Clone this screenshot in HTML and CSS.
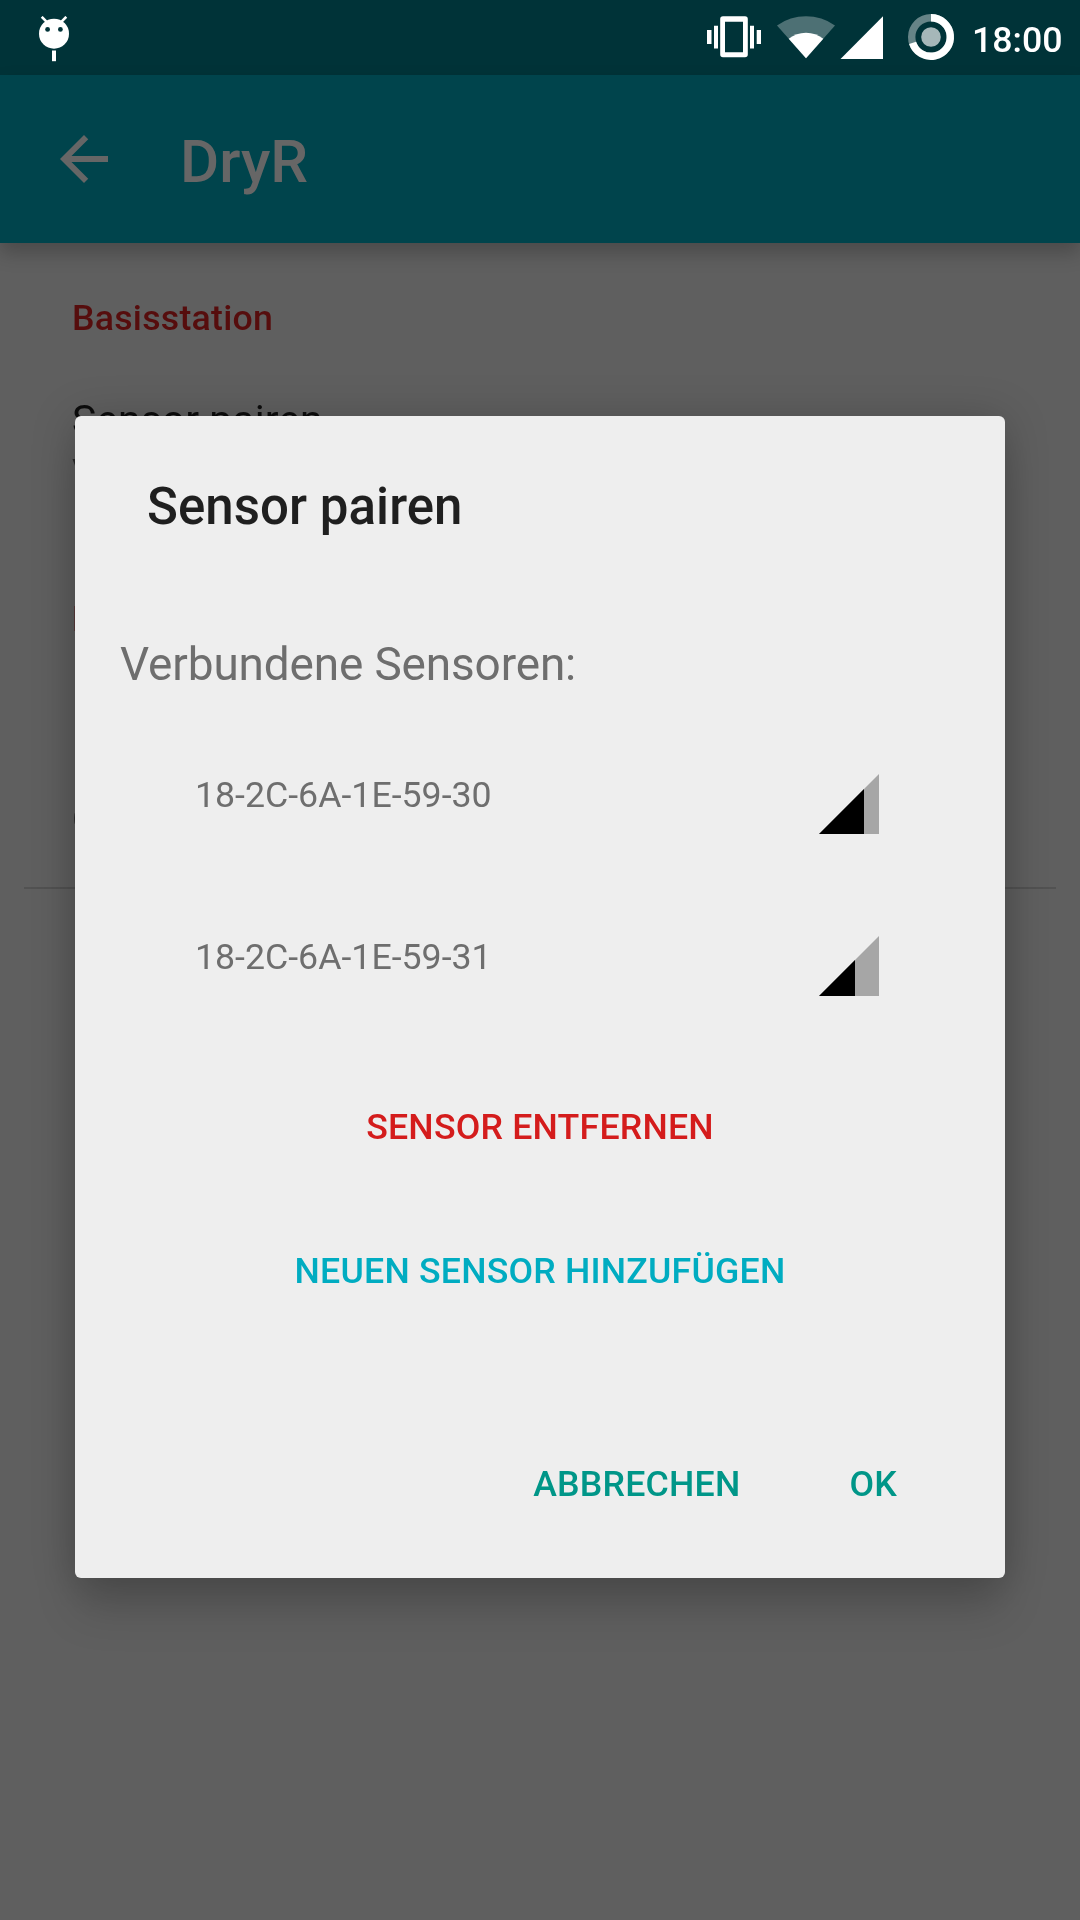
FILE: index.html
```html
<!DOCTYPE html>
<html lang="de">
<head>
<meta charset="utf-8">
<title>DryR</title>
<link rel="stylesheet" href="styles.css">
</head>
<body>
<div class="screen">
  <header class="status-bar">
    <svg class="debug-icon" width="32" height="48" viewBox="0 0 32 48">
      <circle cx="16" cy="17.7" r="15" fill="#fff"/>
      <path d="M3.7 .8l5 5M28.3 .8l-5 5" stroke="#fff" stroke-width="2.6"/>
      <circle class="eye" cx="9.6" cy="13.4" r="2.4"/>
      <circle class="eye" cx="22.4" cy="13.4" r="2.4"/>
      <path d="M14 34.5h4V45.2h-4z" fill="#fff"/>
    </svg>
    <svg class="status-icons" width="260" height="75" viewBox="700 0 260 75" fill="#fff">
      <path fill-rule="evenodd" d="M723 16.3h22q2.8 0 2.8 2.8v35.4q0 2.8-2.8 2.8h-22q-2.8 0-2.8-2.8V19.1q0-2.8 2.8-2.8zM725 21.8v30.4h18V21.8z"/>
      <path d="M714 25.7h4v22.7h-4zM707 30h4.5v14H707zM750 25.7h4v22.7h-4zM756.7 30h4.3v14h-4.3z"/>
      <path opacity=".3" d="M806 58.3L777 25.5A50 50 0 0 1 835 25.5z"/>
      <path d="M806 58.3L788.7 38.8A27.6 27.6 0 0 1 823.3 38.8z"/>
      <path d="M840.5 59H883V16.3z"/>
      <circle cx="931" cy="37" r="19.3" fill="none" stroke="#fff" stroke-opacity=".4" stroke-width="7.4"/>
      <path d="M931 17.7A19.3 19.3 0 1 1 912.6 42.8" fill="none" stroke="#fff" stroke-width="7.4"/>
      <circle cx="931" cy="37" r="9.8" opacity=".65"/>
    </svg>
    <span class="clock">18:00</span>
  </header>

  <div class="app-bar">
    <svg width="72" height="72" viewBox="0 0 24 24"><path d="M20 11H7.83l5.59-5.59L12 4l-8 8 8 8 1.41-1.41L7.83 13H20z"/></svg>
    <h1 class="app-title">DryR</h1>
  </div>

  <main class="settings">
    <h2 class="category">Basisstation</h2>
    <div class="preference">
      <div class="pref-title">Sensor pairen</div>
      <div class="pref-summary">V</div>
    </div>
    <h2 class="category category-next">B</h2>
    <div class="preference preference-last">
      <div class="pref-title">G</div>
    </div>
  </main>

  <section class="dialog" role="dialog">
    <h2 class="dialog-title">Sensor pairen</h2>
    <p class="dialog-label">Verbundene Sensoren:</p>
    <ul class="sensors">
      <li class="sensor">
        <span class="sensor-id">18-2C-6A-1E-59-30</span>
        <svg width="60" height="60" viewBox="0 0 60 60"><path d="M0 60H60V0z" fill="#a6a6a6"/><path d="M0 60H45V15z"/></svg>
      </li>
      <li class="sensor">
        <span class="sensor-id">18-2C-6A-1E-59-31</span>
        <svg width="60" height="60" viewBox="0 0 60 60"><path d="M0 60H60V0z" fill="#a6a6a6"/><path d="M0 60H36V24z"/></svg>
      </li>
    </ul>
    <button class="action remove">SENSOR ENTFERNEN</button>
    <button class="action add">NEUEN SENSOR HINZUFÜGEN</button>
    <footer class="dialog-buttons">
      <button class="action">ABBRECHEN</button>
      <button class="action">OK</button>
    </footer>
  </section>
</div>
</body>
</html>
```
FILE: styles.css
```css
* {
  box-sizing: border-box;
  margin: 0;
  padding: 0;
}

body {
  font-family: Roboto, "Liberation Sans", sans-serif;
  background: #5f5f5f;
}

svg {
  display: block;
  flex: none;
}

.screen {
  position: relative;
  display: flex;
  flex-direction: column;
  width: 1080px;
  height: 1920px;
  overflow: hidden;
  will-change: transform;
}

.status-bar {
  display: flex;
  align-items: center;
  height: 75px;
  flex: none;
  padding: 0 18px 0 38px;
  background: #003338;
  color: #fff;
}

.debug-icon {
  margin-top: 5px;
}

.eye {
  fill: #003338;
}

.status-icons {
  margin-left: auto;
}

.clock {
  width: 102px;
  padding: 4px 0 0 12px;
  font-size: 35.7px;
  font-weight: 500;
  line-height: 48px;
}

.app-bar {
  display: flex;
  align-items: center;
  gap: 60px;
  height: 168px;
  flex: none;
  padding-left: 48px;
  background: #00444c;
  color: #666;
  fill: #666;
  box-shadow: 0 10px 18px rgba(0, 0, 0, .22);
}

.app-title {
  padding-top: 5px;
  font-size: 60px;
  font-weight: 500;
  line-height: 72px;
}

.settings {
  padding: 51px 24px 0;
}

.category {
  padding-left: 48px;
  font-size: 35.7px;
  font-weight: 500;
  line-height: 48px;
  letter-spacing: .24px;
  color: #560d0d;
}

.category-next {
  margin-top: 99px;
}

.preference {
  padding: 52px 0 0 48px;
}

.pref-title {
  font-size: 40.8px;
  line-height: 52px;
  letter-spacing: .1px;
  color: #0c0c0c;
}

.pref-summary {
  margin-top: 2px;
  font-size: 35.7px;
  line-height: 48px;
  color: #2b2b2b;
}

.preference-last {
  padding: 150px 0 42px 48px;
  border-bottom: 2px solid #525252;
}

.dialog {
  position: absolute;
  left: 75px;
  top: 416px;
  display: flex;
  flex-direction: column;
  width: 930px;
  height: 1162px;
  padding: 61px 0 0;
  border-radius: 6px;
  background: #eee;
  box-shadow: 0 36px 44px -2px rgba(0, 0, 0, .13), 0 3px 44px rgba(0, 0, 0, .21);
}

.dialog-title {
  padding-left: 72px;
  font-size: 51px;
  font-weight: 500;
  line-height: 60px;
  letter-spacing: .05px;
  color: #1f1f1f;
}

.dialog-label {
  margin-top: 100px;
  padding-left: 45px;
  font-size: 45.9px;
  line-height: 54px;
  letter-spacing: -.12px;
  color: #6e6e6e;
}

.sensors {
  display: flex;
  flex-direction: column;
  gap: 102px;
  margin-top: 83px;
  padding: 0 126px 0 120px;
  list-style: none;
}

.sensor {
  display: flex;
  justify-content: space-between;
  height: 60px;
}

.sensor-id {
  font-size: 35.7px;
  line-height: 42px;
  color: #6e6e6e;
}

.action {
  border: 0;
  background: none;
  font: 500 35.7px/48px Roboto, "Liberation Sans", sans-serif;
  letter-spacing: .2px;
  color: #009688;
}

.remove,
.add {
  height: 144px;
}

.remove {
  margin-top: 59px;
  color: #d41c1c;
}

.add {
  color: #00acc1;
}

.dialog-buttons {
  display: flex;
  justify-content: flex-end;
  gap: 109px;
  margin-top: 117px;
  padding-right: 108px;
}
```
